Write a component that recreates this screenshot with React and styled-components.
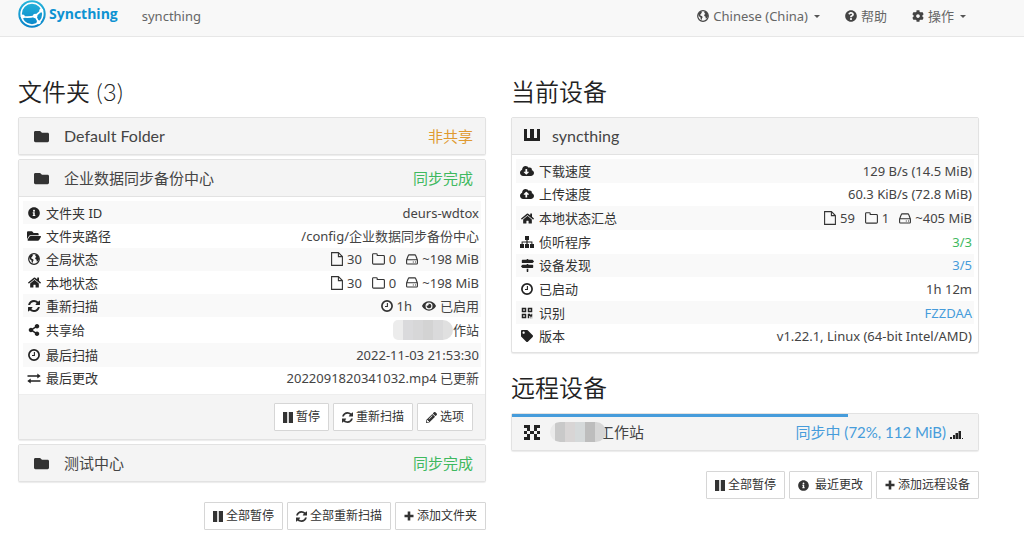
import React from 'react';
import styled, { createGlobalStyle } from 'styled-components';
import {
  FaFolder, FaInfoCircle, FaFolderOpen, FaShareAlt,
  FaCloudDownloadAlt, FaCloudUploadAlt, FaMapSigns, FaQrcode, FaTag,
  FaQuestionCircle, FaCog, FaEye, FaPencilAlt, FaHome,
} from 'react-icons/fa';

const GlobalStyle = createGlobalStyle`
  * { box-sizing: border-box; }
  body {
    margin: 0;
    background: #fff;
    color: #333;
    font: 13px/18px "Noto Sans", "Noto Sans CJK SC", sans-serif;
  }
  button, h2, h3 { font: inherit; margin: 0; }
  svg { display: block; flex: none; }
`;

/* ---------- icons ---------- */

const PauseIcon = () => (
  <svg width="10" height="11" viewBox="0 0 10 11" fill="currentColor" aria-hidden="true">
    <path d="M0 0h4.200v11H0zM5.800 0H10v11H5.800z" />
  </svg>
);

const PlusIcon = () => (
  <svg width="10" height="10" viewBox="0 0 10 10" fill="currentColor" aria-hidden="true">
    <path d="M3.700.5h2.600v3.200h3.200v2.600H6.300v3.200H3.700V6.300H.5V3.700h3.200z" />
  </svg>
);

const RefreshIcon = ({ size = 12 }) => (
  <svg width={size} height={size} viewBox="0 0 1536 1536" fill="currentColor" aria-hidden="true">
    <path d="M1511 928q0 5-1 7-64 268-268 434.500T764 1536q-146 0-282.500-55T238 1324l-129 129q-19 19-45 19t-45-19-19-45V960q0-26 19-45t45-19h448q26 0 45 19t19 45-19 45l-137 137q71 66 161 102t187 36q134 0 250-65t186-179q11-17 53-117 8-23 30-23h192q13 0 22.500 9.500t9.500 22.500zm25-800v448q0 26-19 45t-45 19h-448q-26 0-45-19t-19-45 19-45l138-138Q969 256 768 256q-134 0-250 65T332 500q-11 17-53 117-8 23-30 23H50q-13 0-22.500-9.500T18 608v-7q65-268 270-434.500T768 0q146 0 284 55.500T1297 212l130-129q19-19 45-19t45 19 19 45z" />
  </svg>
);

const ClockIcon = () => (
  <svg width="12" height="12" viewBox="0 0 12 12" fill="none" stroke="currentColor" aria-hidden="true">
    <circle cx="6" cy="6" r="5.100" strokeWidth="1.700" />
    <path d="M6.400 3v3.500H4" strokeWidth="1.100" />
  </svg>
);

const GlobeIcon = () => (
  <svg width="12" height="12" viewBox="0 0 12 12" aria-hidden="true">
    <circle cx="6" cy="6" r="5.300" fill="none" stroke="currentColor" strokeWidth="1.200" />
    <path
      d="M1.200 4.400 2.800 2 4.800 1.200l.2 1.200-1 .7.4.8-1.300.7.3.9 1.300.5 1 1-.7 1.200-.4 1.900L3.700 9 3.400 7.300 1.900 6.200zM7.300 1.200l2.200.9 1.300 2.100.2 2.100-1.100 1.900-1.100.3-.4-1.900L7.300 6.100l-.1-1.400 1.200-.8-1.100-1.200z"
      fill="currentColor"
    />
  </svg>
);

const SitemapIcon = () => (
  <svg width="14" height="12" viewBox="0 0 14 12" fill="currentColor" aria-hidden="true">
    <path d="M5 0h4v4H7.600v1.400h4.800V8H14v4h-4V8h1.400V6.400H7.600V8H9v4H5V8h1.400V6.400H2.600V8H4v4H0V8h1.600V5.400h4.800V4H5z" />
  </svg>
);

const ExchangeIcon = () => (
  <svg width="14" height="11" viewBox="0 0 14 11" aria-hidden="true">
    <path d="M.5 3H11M3 8h10.500" stroke="currentColor" strokeWidth="1.600" fill="none" />
    <path d="M10.300.4 13.700 3l-3.400 2.600zM3.700 5.400.3 8l3.400 2.600z" fill="currentColor" />
  </svg>
);

const FileIcon = () => (
  <svg width="12" height="14" viewBox="0 0 12 14" fill="none" stroke="currentColor" strokeWidth="1.100" aria-hidden="true">
    <path d="M.6.6h6.800l4 4v8.800H.6zM7.400.6v4h4" />
  </svg>
);

const FolderIcon = () => (
  <svg width="13" height="12" viewBox="0 0 13 12" fill="none" stroke="currentColor" strokeWidth="1.100" strokeLinejoin="round" aria-hidden="true">
    <path d="M.6 1.600Q.6.8 1.400.8h3q.8 0 .8.8v.9h6.200q1 0 1 .9v6.800q0 .9-1 .9h-9.900q-.9 0-.9-.9z" />
  </svg>
);

const DiskIcon = () => (
  <svg width="12" height="11" viewBox="0 0 12 11" fill="none" stroke="currentColor" strokeWidth="1.100" strokeLinejoin="round" aria-hidden="true">
    <path d="M.6 6 2.300 1.500Q2.500.9 3.200.9h5.600q.7 0 .9.6L11.400 6v3.200q0 .8-.8.8H1.400q-.8 0-.8-.8zM.6 5.800h10.800M6.800 8h1M9 8h1" />
  </svg>
);

const SignalIcon = () => (
  <svg width="13" height="9" viewBox="0 0 13 9" fill="currentColor" aria-hidden="true">
    <path d="M0 7h2v2H0zM3 5h2v4H3zM5.500 3H8v6H5.500zM8.500 1H11v8H8.500zM12 8h1v1h-1z" />
  </svg>
);

const Identicon = ({ cells }) => (
  <svg width="16" height="15" viewBox="0 0 5 5" preserveAspectRatio="none" fill="#222" shapeRendering="crispEdges" aria-hidden="true">
    {cells.flatMap((line, y) =>
      [...line].map((c, x) => c === 'X' && <rect key={`${x}-${y}`} x={x} y={y} width="1" height="1" />))}
  </svg>
);

const LogoMark = () => (
  <svg width="28" height="28" viewBox="0 0 28 28" aria-hidden="true">
    <defs>
      <linearGradient id="mark" x1="0" y1="0" x2="0" y2="1">
        <stop offset="0" stopColor="#26b6db" />
        <stop offset="1" stopColor="#0882c8" />
      </linearGradient>
    </defs>
    <circle cx="14" cy="14" r="13.700" fill="url(#mark)" />
    <circle cx="14" cy="14" r="10.900" fill="none" stroke="#fff" strokeWidth="1.500" />
    <g stroke="#fff" strokeWidth="1.700" fill="none">
      <path d="M17.200 16 24 10.200M17.200 16l3.600 6.600M17.200 16Q10 18 4 16.500" />
    </g>
    <g fill="#fff">
      <circle cx="17.200" cy="16" r="2.300" />
      <circle cx="23.300" cy="10.500" r="2" />
      <circle cx="20.600" cy="22.200" r="2" />
      <circle cx="4.800" cy="16.600" r="2" />
    </g>
  </svg>
);

/* ---------- navigation ---------- */

const Navbar = styled.nav`
  display: flex;
  align-items: flex-start;
  height: 37px;
  padding: 0 58px 0 18px;
  background: #f8f8f8;
  border-bottom: 1px solid #e7e7e7;
  color: #666;
`;

const Brand = styled.a`
  display: flex;
  align-items: center;
  gap: 3px;
  height: 28px;
  color: #0d92d2;
  font: 700 14px/28px "Open Sans", sans-serif;
  text-decoration: none;
`;

const DeviceName = styled.span`
  margin: 0 auto 0 24px;
  line-height: 32px;
`;

const NavMenu = styled.div`
  display: flex;
  gap: 25px;
`;

const NavButton = styled.button`
  display: flex;
  align-items: center;
  gap: 4px;
  height: 32px;
  padding: 0;
  border: 0;
  background: none;
  color: #666;
  white-space: nowrap;
  cursor: pointer;
  svg { color: #444; }
`;

const Caret = styled.span`
  margin-left: 2px;
  border: 3px solid transparent;
  border-top-color: #555;
  border-bottom: 0;
`;

/* ---------- page ---------- */

const Page = styled.main`
  display: grid;
  grid-template-columns: 1fr 1fr;
  align-items: start;
  gap: 25px;
  padding: 38px 45px 0 18px;
`;

const Column = styled.section`
  display: flex;
  flex-direction: column;
  min-width: 0;
`;

const Heading = styled.h2`
  margin: ${(p) => (p.$next ? '18px' : '0')} 0 8px;
  color: #222;
  font: 350 24px/34px Lato, "Noto Sans CJK SC", sans-serif;
`;

const PanelStack = styled.div`
  display: flex;
  flex-direction: column;
  gap: 4px;
`;

const Panel = styled.article`
  position: relative;
  border: 1px solid #e2e2e2;
  border-radius: 2px;
  background: #fff;
  box-shadow: 0 1px 1px rgba(0, 0, 0, 0.08);
`;

const PanelHeader = styled.h3`
  display: flex;
  align-items: center;
  height: ${(p) => (p.$open ? '37px' : '36px')};
  padding: 0 12px;
  background: #f4f4f4;
  border-bottom: ${(p) => (p.$open ? '1px solid #e2e2e2' : '0')};
  color: #444;
  font: 400 15px/20px Lato, "Noto Sans CJK SC", sans-serif;
`;

const TitleIcon = styled.span`
  display: flex;
  justify-content: ${(p) => (p.$wide ? 'flex-start' : 'center')};
  width: ${(p) => (p.$wide ? '28px' : '20px')};
  margin-right: ${(p) => (p.$wide ? '0' : '13px')};
  color: #333;
`;

const Title = styled.span`
  display: flex;
  align-items: center;
  font-size: ${(p) => (p.$latin ? '16px' : '15px')};
`;

const tones = { green: '#3fb95f', orange: '#e09a30', blue: '#469cdb' };

const Status = styled.span`
  display: flex;
  align-items: center;
  gap: 4px;
  margin-left: auto;
  color: ${(p) => tones[p.$tone]};
  svg { color: #222; margin: 4px 3px 0 0; }
`;

const Progress = styled.div`
  position: absolute;
  top: 0;
  left: 0;
  height: 3px;
  background: #469cdb;
`;

const PanelBody = styled.div`
  padding: 4px;
`;

const InfoTable = styled.table`
  width: 100%;
  height: 189px;
  border-collapse: collapse;
  color: #333;
  tr:nth-child(odd) { background: #f9f9f9; }
  th, td { padding: 0 2px 0 4px; font-weight: 400; }
  th { text-align: left; }
`;

const Label = styled.span`
  display: flex;
  align-items: center;
  gap: 5px;
`;

const IconSlot = styled.span`
  display: flex;
  justify-content: center;
  width: 14px;
  color: #222;
`;

const Value = styled.span`
  display: flex;
  align-items: center;
  justify-content: flex-end;
  gap: ${(p) => (p.$spaced ? '10px' : '0')};
  color: ${(p) => tones[p.$tone] || '#444'};
  a { color: inherit; text-decoration: none; }
`;

const Stat = styled.span`
  display: flex;
  align-items: center;
  gap: 4px;
  svg { color: #333; }
`;

const Masked = styled.span`
  position: relative;
  flex: none;
  width: ${(p) => (p.$large ? '56px' : '60px')};
  height: 20px;
  margin: ${(p) => (p.$large ? '0 -7px 0 -2px' : '0')};
  border-radius: ${(p) => (p.$large ? '10px' : '5px 10px 10px 5px')};
  background: ${(p) => (p.$large
    ? 'linear-gradient(90deg, #eaeaea 5px, #c9c9c9 5px 15px, #d8d5d5 15px 25px, #d5d9da 25px 35px, #bdbdbd 35px 45px, #d6d6d6 45px)'
    : 'linear-gradient(90deg, #ececec 10px, #dadadc 10px 20px, #d7d7d8 20px 30px, #d3d3d3 30px 40px, #dadadb 40px 50px, #e0e0e0 50px)')};
`;

const PanelFooter = styled.div`
  display: flex;
  justify-content: flex-end;
  gap: 4px;
  padding: 8px 12px;
  background: #f4f4f4;
  border-top: 1px solid #eee;
`;

const Actions = styled.div`
  display: flex;
  justify-content: flex-end;
  gap: 4px;
  margin-top: 20px;
`;

const Button = styled.button`
  display: flex;
  align-items: center;
  gap: ${(p) => (p.$roomy ? '6px' : '3px')};
  height: 28px;
  padding: 0 8px;
  border: 1px solid #d6d6d6;
  border-radius: 1px;
  background: #fff;
  color: #333;
  font-size: 12px;
  white-space: nowrap;
  cursor: pointer;
`;

/* ---------- data ---------- */

const Totals = ({ files, folders, size }) => (
  <Value $spaced>
    <Stat><FileIcon />{files}</Stat>
    <Stat><FolderIcon />{folders}</Stat>
    <Stat><DiskIcon />{size}</Stat>
  </Value>
);

const folderRows = [
  [<FaInfoCircle size={12} />, '文件夹 ID', <Value>deurs-wdtox</Value>],
  [<FaFolderOpen size={14} />, '文件夹路径', <Value>/config/企业数据同步备份中心</Value>],
  [<GlobeIcon />, '全局状态', <Totals files="30" folders="0" size="~198 MiB" />],
  [<FaHome size={13} />, '本地状态', <Totals files="30" folders="0" size="~198 MiB" />],
  [<RefreshIcon />, '重新扫描', (
    <Value $spaced>
      <Stat><ClockIcon />1h</Stat>
      <Stat><FaEye size={14} />已启用</Stat>
    </Value>
  )],
  [<FaShareAlt size={12} />, '共享给', <Value><Masked />作站</Value>],
  [<ClockIcon />, '最后扫描', <Value>2022-11-03 21:53:30</Value>],
  [<ExchangeIcon />, '最后更改', <Value>2022091820341032.mp4 已更新</Value>],
];

const deviceRows = [
  [<FaCloudDownloadAlt size={14} />, '下载速度', <Value>129 B/s (14.5 MiB)</Value>],
  [<FaCloudUploadAlt size={14} />, '上传速度', <Value>60.3 KiB/s (72.8 MiB)</Value>],
  [<FaHome size={13} />, '本地状态汇总', <Totals files="59" folders="1" size="~405 MiB" />],
  [<SitemapIcon />, '侦听程序', <Value $tone="green">3/3</Value>],
  [<FaMapSigns size={13} />, '设备发现', <Value $tone="blue"><a href="#discovery">3/5</a></Value>],
  [<ClockIcon />, '已启动', <Value>1h 12m</Value>],
  [<FaQrcode size={12} />, '识别', <Value $tone="blue"><a href="#identity">FZZDAA</a></Value>],
  [<FaTag size={12} />, '版本', <Value>v1.22.1, Linux (64-bit Intel/AMD)</Value>],
];

const Info = ({ rows }) => (
  <PanelBody>
    <InfoTable>
      <tbody>
        {rows.map(([icon, label, value]) => (
          <tr key={label}>
            <th scope="row"><Label><IconSlot>{icon}</IconSlot>{label}</Label></th>
            <td>{value}</td>
          </tr>
        ))}
      </tbody>
    </InfoTable>
  </PanelBody>
);

const FolderHeader = ({ name, latin, status, tone, open }) => (
  <PanelHeader $open={open}>
    <TitleIcon><FaFolder size={15} /></TitleIcon>
    <Title $latin={latin}>{name}</Title>
    <Status $tone={tone}>{status}</Status>
  </PanelHeader>
);

export default function App() {
  return (
    <>
      <GlobalStyle />
      <Navbar>
        <Brand href="#home"><LogoMark />Syncthing</Brand>
        <DeviceName>syncthing</DeviceName>
        <NavMenu>
          <NavButton><GlobeIcon />Chinese (China)<Caret /></NavButton>
          <NavButton><FaQuestionCircle size={12} />帮助</NavButton>
          <NavButton><FaCog size={12} />操作<Caret /></NavButton>
        </NavMenu>
      </Navbar>
      <Page>
        <Column>
          <Heading>文件夹 (3)</Heading>
          <PanelStack>
            <Panel><FolderHeader name="Default Folder" latin status="非共享" tone="orange" /></Panel>
            <Panel>
              <FolderHeader name="企业数据同步备份中心" status="同步完成" tone="green" open />
              <Info rows={folderRows} />
              <PanelFooter>
                <Button><PauseIcon />暂停</Button>
                <Button><RefreshIcon size={11} />重新扫描</Button>
                <Button><FaPencilAlt size={11} />选项</Button>
              </PanelFooter>
            </Panel>
            <Panel><FolderHeader name="测试中心" status="同步完成" tone="green" /></Panel>
          </PanelStack>
          <Actions>
            <Button><PauseIcon />全部暂停</Button>
            <Button><RefreshIcon size={11} />全部重新扫描</Button>
            <Button><PlusIcon />添加文件夹</Button>
          </Actions>
        </Column>
        <Column>
          <Heading>当前设备</Heading>
          <Panel>
            <PanelHeader $open>
              <TitleIcon $wide><Identicon cells={['X.X.X', 'X.X.X', 'X.X.X', 'XXXXX', '.....']} /></TitleIcon>
              <Title $latin>syncthing</Title>
            </PanelHeader>
            <Info rows={deviceRows} />
          </Panel>
          <Heading $next>远程设备</Heading>
          <Panel>
            <Progress style={{ width: '72%' }} />
            <PanelHeader>
              <TitleIcon $wide><Identicon cells={['XX.XX', '.X.X.', 'X.X.X', '.X.X.', 'XX.XX']} /></TitleIcon>
              <Title><Masked $large />工作站</Title>
              <Status $tone="blue">同步中 (72%, 112 MiB)<SignalIcon /></Status>
            </PanelHeader>
          </Panel>
          <Actions>
            <Button><PauseIcon />全部暂停</Button>
            <Button $roomy><FaInfoCircle size={11} />最近更改</Button>
            <Button><PlusIcon />添加远程设备</Button>
          </Actions>
        </Column>
      </Page>
    </>
  );
}
